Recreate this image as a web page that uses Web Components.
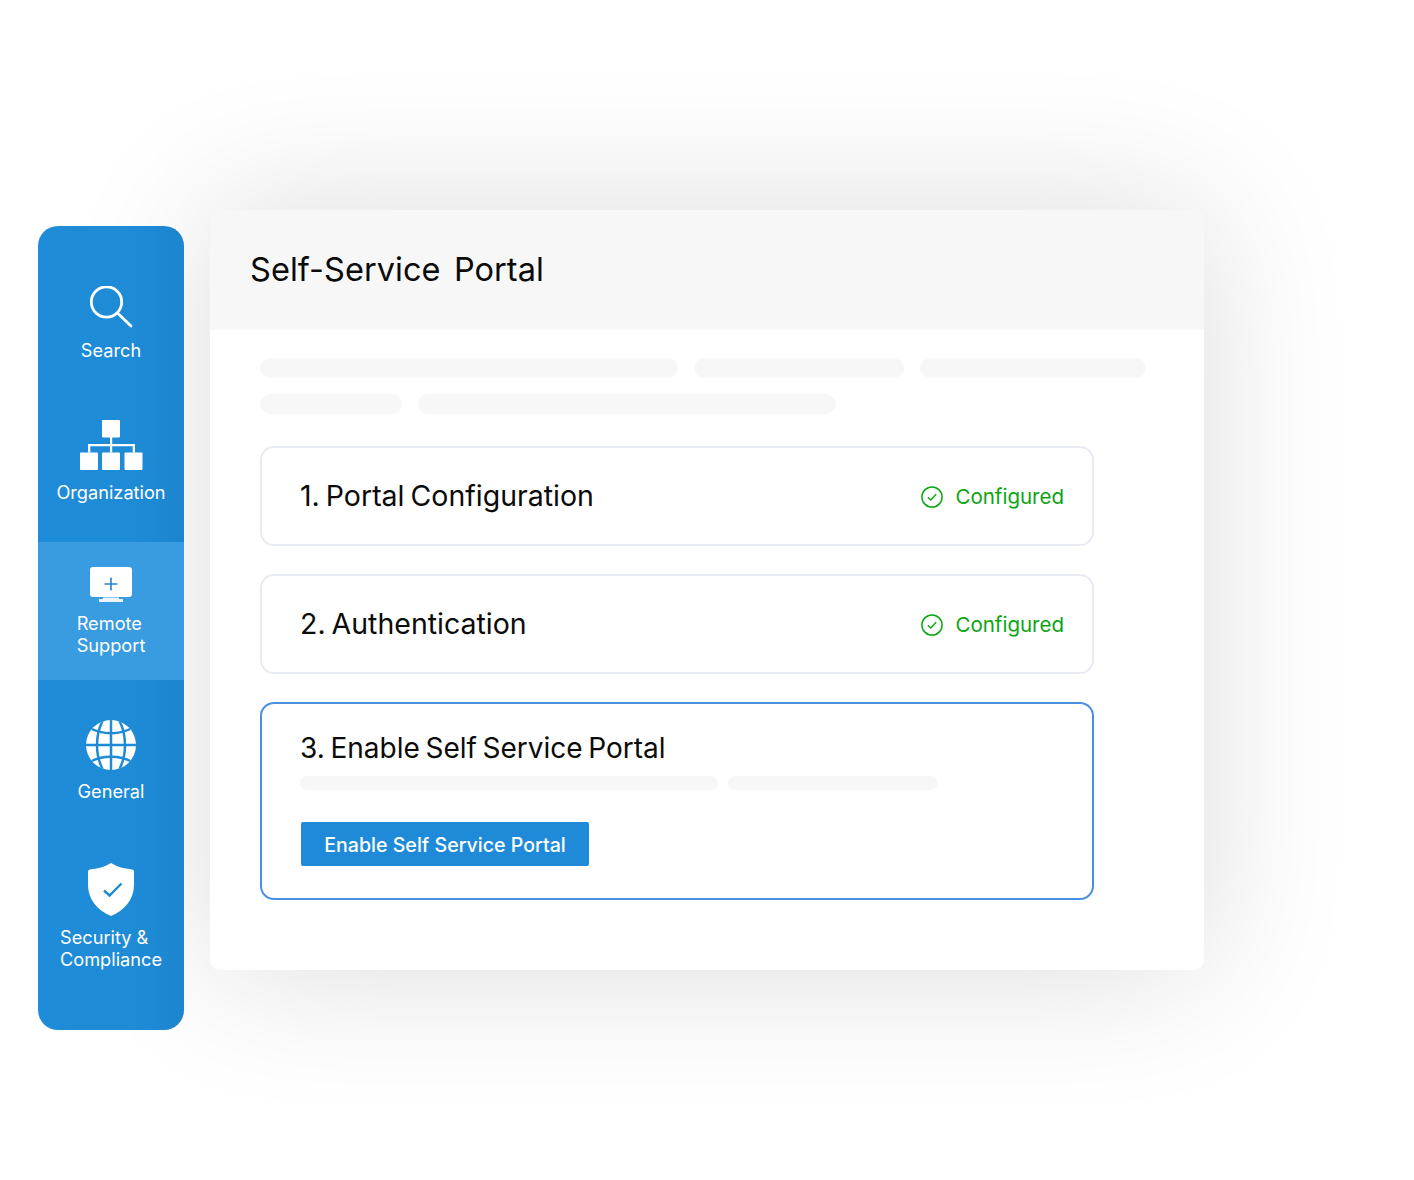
<!DOCTYPE html>
<html lang="en"><head><meta charset="utf-8"><title>Self-Service Portal</title>
<style>
html,body{margin:0;padding:0;background:#fff;}
body{font-family:Inter,"Noto Sans",sans-serif;width:1414px;height:1180px;overflow:hidden;}
</style></head><body>
<portal-scene>
  <side-bar slot="side">
    <nav-item pad="60" h="168" gap="9">
      <svg slot="icon" width="44" height="44" viewBox="0 0 44 44" fill="none" stroke="#fff" stroke-width="2.800" stroke-linecap="round"><circle cx="17.500" cy="16" r="15.200"/><path d="M28.500 27 42 40"/></svg>
      Search
    </nav-item>
    <nav-item pad="26" h="148" gap="11">
      <svg slot="icon" width="64" height="50" viewBox="0 0 64 50" fill="#fff"><rect x="23" y="0" width="18" height="17.500" rx="1"/><rect x="1" y="32.500" width="18" height="17.500" rx="1"/><rect x="23" y="32.500" width="18" height="17.500" rx="1"/><rect x="45.500" y="32.500" width="18" height="17.500" rx="1"/><path d="M31 17h2.200v7h22.800v8.500h-2.300v-6.200H33.200v6.200H31v-6.200H11.300v6.200H9V24h22z"/></svg>
      Organization
    </nav-item>
    <nav-item active pad="25" h="138" gap="10" left>
      <svg slot="icon" width="44" height="35" viewBox="0 0 44 35" fill="#fff"><rect x="1" y="0" width="42" height="30" rx="3"/><path d="M14 30.500h16v1.500h4v3H10v-3h4z" fill="#eaf4fc"/><path d="M22 10.500v13M15.500 17h13" stroke="#2a82c4" stroke-width="1.600" fill="none"/></svg>
      Remote<br>Support
    </nav-item>
    <nav-item pad="40" h="156" gap="10">
      <svg slot="icon" width="50" height="50" viewBox="0 0 50 50" fill="#fff">
        <defs><clipPath id="g"><circle cx="25" cy="25" r="25"/></clipPath></defs>
        <g clip-path="url(#g)"><rect width="50" height="50"/>
        <g fill="none" stroke="#1e8bd6" stroke-width="2.500">
          <path d="M25 0v50M0 25h50"/>
          <path d="M17 0C9 15 9 35 17 50M33 0c8 15 8 35 0 50"/>
          <path d="M4 8c12 7 30 7 42 0M4 42c12-7 30-7 42 0"/>
        </g></g>
      </svg>
      General
    </nav-item>
    <nav-item pad="27" h="194" gap="10" left>
      <svg slot="icon" width="46" height="53" viewBox="0 0 46 53"><path d="M23 0c5 3.500 12 5.500 21 6.500 1 .1 2 1 2 2.200v13C46 37 36 47.500 23 53 10 47.500 0 37 0 21.700v-13C0 7.500 1 6.600 2 6.500 11 5.500 18 3.500 23 0z" fill="#fff"/><path d="M16 27.500l5.500 5L33.500 20.500" fill="none" stroke="#1e8bd6" stroke-width="2.400"/></svg>
      Security &amp;<br>Compliance
    </nav-item>
  </side-bar>
  <portal-card slot="main" heading="Self-Service  Portal">
    <skeleton-row gap="16" h="20" mb="16"><skeleton-bar w="418"></skeleton-bar><skeleton-bar w="210"></skeleton-bar><skeleton-bar w="226"></skeleton-bar></skeleton-row>
    <skeleton-row gap="16" h="20" mb="32"><skeleton-bar w="142"></skeleton-bar><skeleton-bar w="418"></skeleton-bar></skeleton-row>
    <step-row>1. Portal Configuration</step-row>
    <step-row>2. Authentication</step-row>
    <step-active title-text="3. Enable Self Service Portal" action="Enable Self Service Portal">
      <skeleton-row gap="10" h="14" mb="0"><skeleton-bar w="418"></skeleton-bar><skeleton-bar w="210"></skeleton-bar></skeleton-row>
    </step-active>
  </portal-card>
</portal-scene>
<script>
function def(name, css, html, init){
  customElements.define(name, class extends HTMLElement{
    constructor(){super();const s=this.attachShadow({mode:'open'});s.innerHTML='<style>'+css+'</style>'+html;}
    connectedCallback(){if(init)init.call(this,this.shadowRoot);}
  });
}
def('portal-scene',
 ':host{display:flex;align-items:flex-start;padding:210px 0 0 38px;box-sizing:border-box;width:1414px;height:1180px}'+
 '.s{display:block;margin-top:16px;margin-right:26px;position:relative;z-index:1}',
 '<div class="s"><slot name="side"></slot></div><slot name="main"></slot>');
def('side-bar',
 ':host{display:flex;flex-direction:column;width:146px;height:804px;border-radius:20px;overflow:hidden;background:linear-gradient(90deg,#1f8cd9,#1e8bd7 65%,#1d85ce)}',
 '<slot></slot>');
def('nav-item',
 ':host{display:flex;flex-direction:column;align-items:center;box-sizing:border-box;color:#fff;font:400 18.200px/22px Inter,"Noto Sans",sans-serif;text-align:center}'+
 ':host([active]){background:#399be0}:host([left]){text-align:left}'+
 '.i{display:flex;justify-content:center;line-height:0}.t{display:block}',
 '<div class="i"><slot name="icon"></slot></div><div class="t"><slot></slot></div>',
 function(s){this.style.height=this.getAttribute('h')+'px';this.style.paddingTop=this.getAttribute('pad')+'px';
   s.querySelector('.i').style.marginBottom=this.getAttribute('gap')+'px';});
def('portal-card',
 ':host{display:block;width:994px;height:760px;background:#fff;border-radius:10px;overflow:hidden;position:relative;flex:none;box-shadow:0 0 150px rgba(0,0,0,.14)}'+
 'h1{margin:0;height:120px;box-sizing:border-box;padding:40px 40px 0;background:#f7f7f7;font:400 32.500px/40px Inter,"Noto Sans",sans-serif;color:#0b0b0b;white-space:pre;word-spacing:-2.500px;letter-spacing:.05px}'+
 '.b{display:flex;flex-direction:column;padding:28px 50px 0}',
 '<h1></h1><div class="b"><slot></slot></div>',
 function(s){s.querySelector('h1').textContent=this.getAttribute('heading');});
def('skeleton-row',':host{display:flex}','<slot></slot>',
 function(){this.style.gap=this.getAttribute('gap')+'px';this.style.height=this.getAttribute('h')+'px';this.style.marginBottom=this.getAttribute('mb')+'px';});
def('skeleton-bar',':host{display:block;height:100%;background:#f7f7f7;border-radius:10px}','',
 function(){this.style.width=this.getAttribute('w')+'px';});
def('step-row',
 ':host{display:flex;align-items:center;justify-content:space-between;box-sizing:border-box;width:834px;height:100px;margin-bottom:28px;padding:0 28px 0 38px;border:2px solid #e8ebf1;border-radius:14px;background:#fff;font:400 28.500px/36px Inter,"Noto Sans",sans-serif;color:#0b0b0b;word-spacing:-2px}'+
 '.c{display:flex;align-items:center;gap:12px;color:#0aa512;font-size:20.500px;line-height:26px;word-spacing:0;padding-top:1px}',
 '<span><slot></slot></span><span class="c"><svg width="22" height="22" viewBox="0 0 24 24" fill="none" stroke="#0aa512"><circle cx="12" cy="12" r="11" stroke-width="1.600"/><path d="M7.500 12.300l3.200 3 5.800-6.300" stroke-width="1.600"/></svg>Configured</span>');
def('step-active',
 ':host{display:block;box-sizing:border-box;width:834px;height:198px;padding:26px 38px 0;border:2px solid #4a90e2;border-radius:14px;background:#fff}'+
 '.h{font:400 28px/36px Inter,"Noto Sans",sans-serif;color:#0b0b0b;margin-bottom:10px;word-spacing:-2.200px}'+
 'button{display:block;margin:32px 0 0 1px;padding:2px 0 0;width:288px;height:44px;border:0;border-radius:2px;background:#1f8bd8;color:#fff;font:500 19.600px/42px Inter,"Noto Sans",sans-serif}',
 '<div class="h"></div><slot></slot><button></button>',
 function(s){s.querySelector('.h').textContent=this.getAttribute('title-text');s.querySelector('button').textContent=this.getAttribute('action');});
</script>
</body></html>
